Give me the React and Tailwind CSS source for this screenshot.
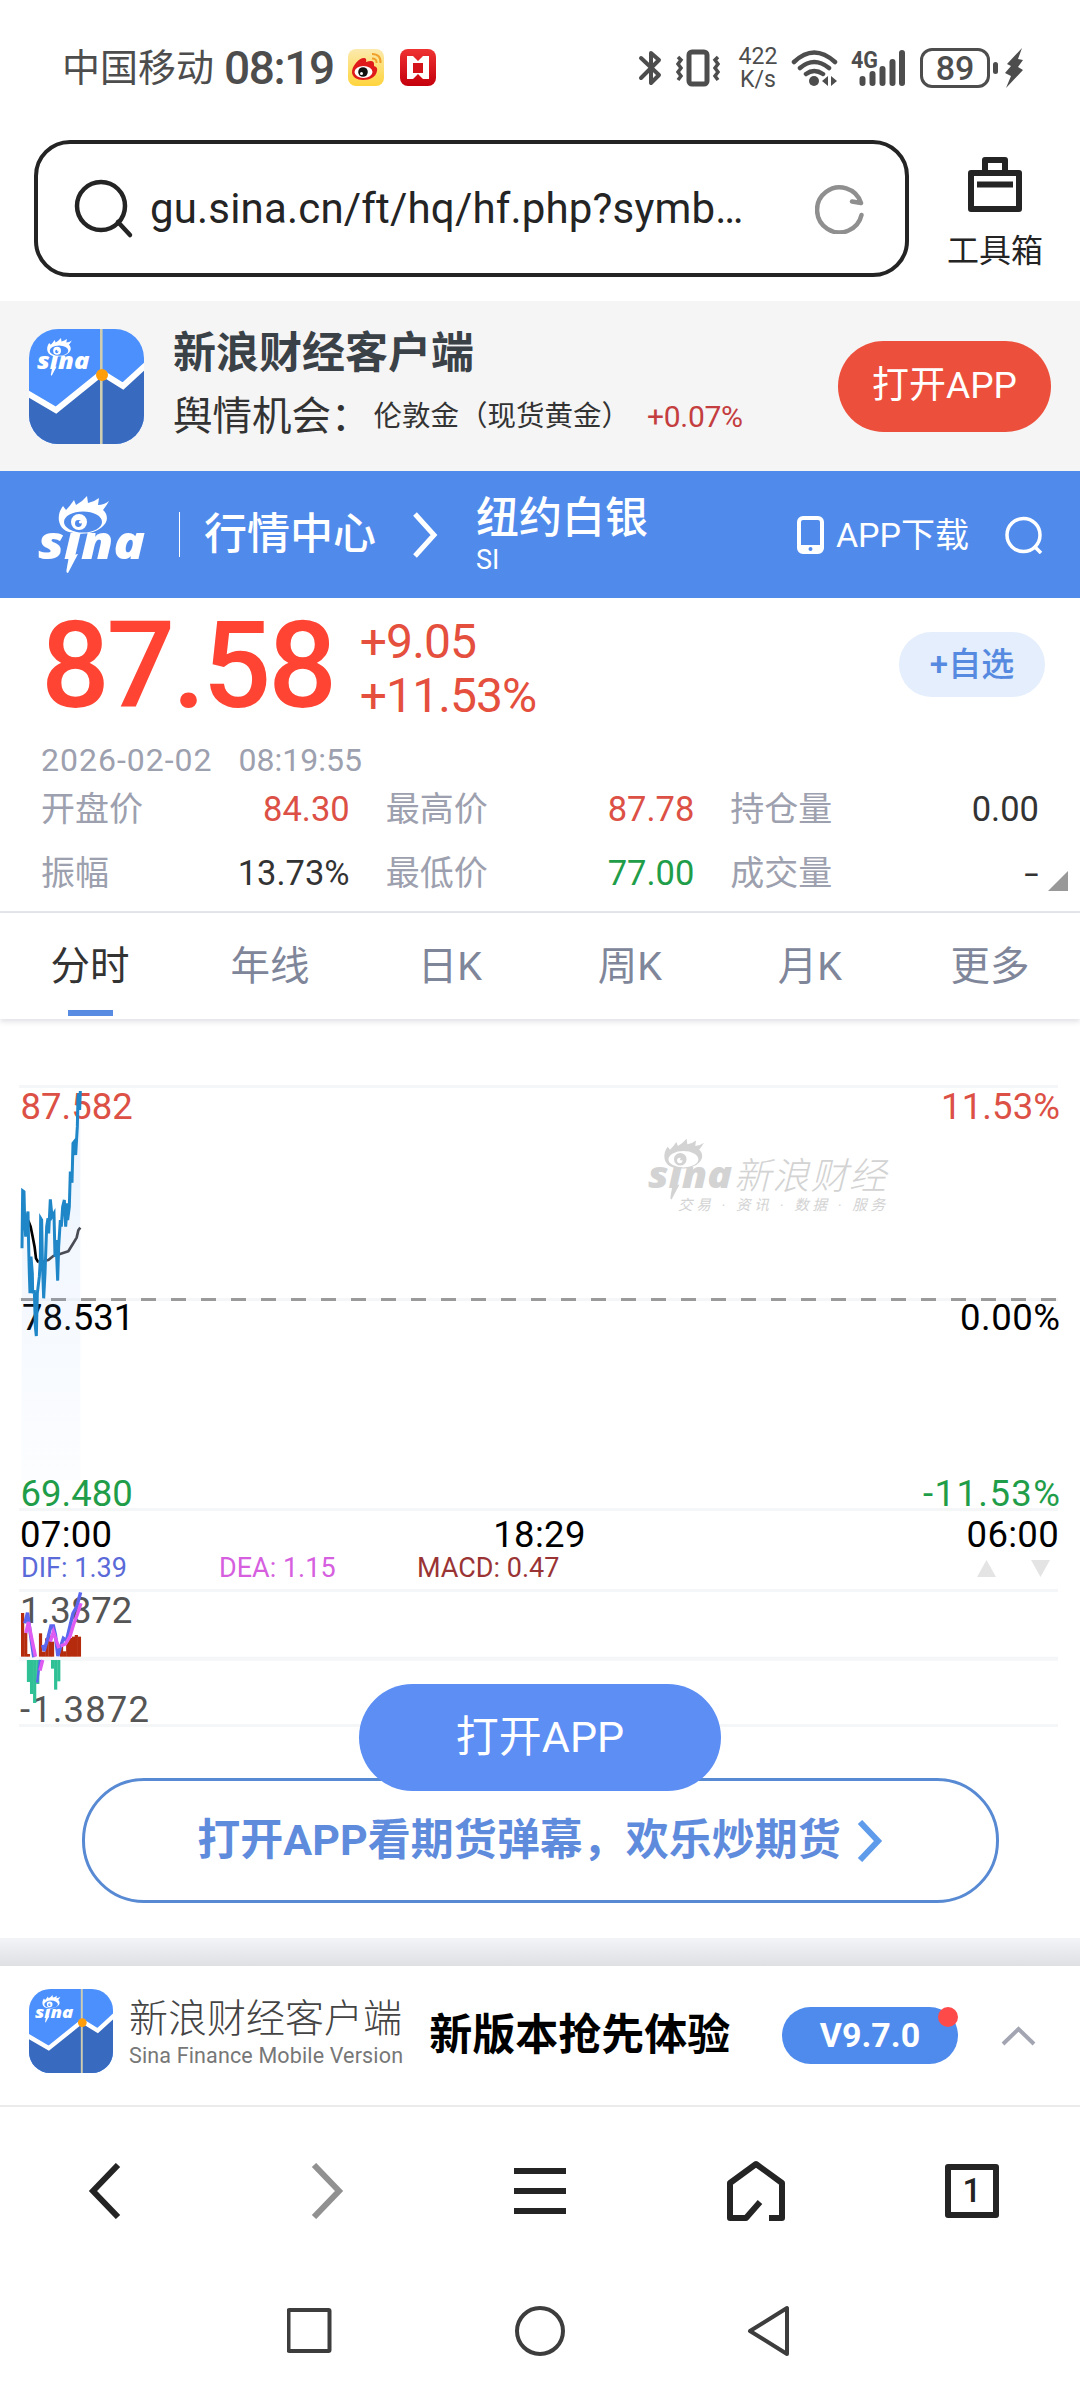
const SinaLogo = ({ className }) => (
  <svg viewBox="0 0 108 78" className={className} fill="currentColor">
    <path
      fillRule="evenodd"
      d="M21 25C20 19 22 14 25 10L28 14Q32 10 36 4L38 9Q44 6 49 0L50 7Q56 6 61 2L60 9Q66 9 71 5Q69 9 65 14C70 18 70 25 66 29C59 37 45 40 31 36C25 34 22 30 21 25Z M26 26a19 10.5 0 1 0 38 0a19 10.5 0 1 0 -38 0Z"
    />
    <path
      fillRule="evenodd"
      d="M33 26a8 8 0 1 0 16 0a8 8 0 1 0 -16 0Z M37 27.5a3.4 3.4 0 1 0 6.8 0a3.4 3.4 0 1 0 -6.8 0Z"
    />
    <circle cx="42.5" cy="26" r="1.6" />
    <path d="M31 60L40 58L30 77Q28 77 28.500 74Z" />
    <text
      x="0"
      y="63"
      fontSize="46"
      fontWeight="800"
      fontStyle="italic"
      fontFamily="Open Sans, sans-serif"
      textLength="107"
      lengthAdjust="spacingAndGlyphs"
    >
      sına
    </text>
  </svg>
)

const AppIcon = ({ className, id }) => (
  <div className={`relative shrink-0 ${className}`}>
    <svg viewBox="0 0 115 115" className="h-full w-full">
      <clipPath id={id}>
        <rect width="115" height="115" rx="29" />
      </clipPath>
      <g clipPath={`url(#${id})`}>
        <rect width="115" height="115" fill="#4c90fd" />
        <path d="M0 65L27 81L73 44L94 58L115 37V115H0Z" fill="#386abf" />
        <path d="M-2 64L27 81L73 44L94 57L118 35" fill="none" stroke="#fff" strokeWidth="6" />
        <path d="M72.300 0V115" stroke="#cfcdb0" strokeWidth="2.600" />
        <circle cx="73" cy="46" r="6" fill="#ff9d0a" />
      </g>
    </svg>
    <SinaLogo className="absolute left-[7%] top-[8%] w-[46%] text-white" />
  </div>
)

const Chevron = ({ className, d, w, h, stroke = 5 }) => (
  <svg width={w} height={h} viewBox={`0 0 ${w} ${h}`} className={className} fill="none" stroke="currentColor" strokeWidth={stroke}>
    <path d={d} />
  </svg>
)

const StatusBar = () => (
  <div className="flex h-[140px] items-center pl-[62px] pr-[57px] pb-[5px] text-[#4d4d4d]">
    <span className="text-[38px] leading-none">中国移动</span>
    <span className="ml-[10px] text-[46px] font-medium leading-none tracking-[-1.400px]">08:19</span>
    <svg width="36" height="37" viewBox="0 0 36 37" className="ml-[14px]">
      <defs>
        <linearGradient id="wb" x2="0" y2="1">
          <stop stopColor="#fbeaae" />
          <stop offset="1" stopColor="#ffd43c" />
        </linearGradient>
      </defs>
      <rect width="36" height="37" rx="8" fill="url(#wb)" />
      <path d="M4 23C4 17 11 9 16 9Q19 9 18 13Q26 10 26 15L26 17Q30 18 29 22C28 28 22 31 15 31C9 31 4 28 4 23Z" fill="#e0191b" />
      <ellipse cx="15.500" cy="23" rx="9" ry="6" fill="#fff" />
      <circle cx="15" cy="23" r="4.800" fill="#111" />
      <circle cx="13.500" cy="24.500" r="1.500" fill="#fff" />
      <path d="M24 5Q33 5 32.500 14M24 9.500Q29 9.500 28.500 14" fill="none" stroke="#f0a12c" strokeWidth="2" />
    </svg>
    <svg width="36" height="37" viewBox="0 0 36 37" className="ml-[16px]">
      <defs>
        <linearGradient id="rd" x2="0" y2="1">
          <stop stopColor="#ef3232" />
          <stop offset="1" stopColor="#c4000c" />
        </linearGradient>
      </defs>
      <rect width="36" height="37" rx="8" fill="url(#rd)" />
      <path d="M7 7H13L18 12L23 7H29V30H23L18 25L13 30H7Z" fill="#fff" />
      <path d="M13 14H23V24H13Z" fill="#d3141a" />
    </svg>

    <div className="ml-auto flex items-center">
      <svg width="24" height="38" viewBox="0 0 24 38" fill="none" stroke="currentColor" strokeWidth="4" strokeLinejoin="round" strokeLinecap="round">
        <path d="M3 9L21 26L13 34V4L21 11L3 29" />
      </svg>
      <svg width="46" height="38" viewBox="0 0 46 38" fill="none" stroke="currentColor" className="ml-[13px]">
        <rect x="14" y="3" width="18" height="32" rx="3" strokeWidth="5" />
        <path d="M3 8L6 11L3 15L6 19L3 23L6 27L3 31M43 8L40 11L43 15L40 19L43 23L40 27L43 31" strokeWidth="3.500" />
      </svg>
      <div className="ml-[16px] flex w-[42px] flex-col items-center text-[23px] leading-[23px]">
        <span>422</span>
        <span>K/s</span>
      </div>
      <svg width="48" height="40" viewBox="0 0 48 40" fill="none" stroke="currentColor" strokeWidth="4.500" strokeLinecap="round" className="ml-[12px]">
        <path d="M3 14Q23 -5 44 14M9 20Q23 8 38 20M15 26Q23 20 32 26" />
        <circle cx="23" cy="33" r="5" fill="currentColor" stroke="none" />
        <path d="M37 28V38L31 33ZM40 28V38L46 33Z" fill="currentColor" stroke="none" />
      </svg>
      <svg width="56" height="40" viewBox="0 0 56 40" fill="none" stroke="currentColor" strokeWidth="6" strokeLinecap="round" className="ml-[12px] overflow-visible">
        <path d="M11.500 31V35M21.500 26V35M31.500 21V35M41.500 14V35M51 5V35" />
        <text x="0" y="20" fontSize="24" fontWeight="700" fill="currentColor" stroke="none" textLength="27" lengthAdjust="spacingAndGlyphs">
          4G
        </text>
      </svg>
      <div className="ml-[13px] flex h-[40px] w-[70px] items-center justify-center rounded-[12px] border-[3px] border-current text-[34px] font-medium leading-none">
        89
      </div>
      <div className="ml-[3px] h-[12px] w-[5px] rounded-full bg-current" />
      <svg width="18" height="40" viewBox="0 0 18 40" fill="currentColor" className="ml-[7px]">
        <path d="M17 0L2 16L6 18L0 25L6 28L1 40L18 22L13 19L18 12L13 11Z" />
      </svg>
    </div>
  </div>
)

const AddressBar = () => (
  <div className="flex h-[161px] pl-[34px]">
    <div className="flex h-[137px] w-[875px] items-center rounded-[36px] border-[4px] border-[#242424] pl-[36px] pr-[40px] text-[#242424]">
      <svg width="60" height="60" viewBox="0 0 60 60" fill="none" stroke="currentColor" strokeWidth="4.500" strokeLinecap="round">
        <circle cx="27" cy="27" r="24" />
        <path d="M44 43L56 56" />
      </svg>
      <span className="ml-[16px] text-[42px] leading-none tracking-[0.180px]">gu.sina.cn/ft/hq/hf.php?symb…</span>
      <svg width="50" height="50" viewBox="0 0 50 50" fill="none" stroke="#8f8f8f" strokeWidth="4.500" className="ml-auto">
        <path d="M46.500 31A22.500 22.500 0 1 1 46 19L37 17.500" strokeLinecap="round" strokeLinejoin="round" />
      </svg>
    </div>
    <div className="ml-[38px] mt-[17px] flex flex-col items-center text-[#242424]">
      <svg width="54" height="55" viewBox="0 0 54 55" fill="none" stroke="currentColor" strokeWidth="6" strokeLinejoin="round">
        <rect x="3" y="16" width="48" height="36" />
        <path d="M17 14V3H37V14M9 27.500H45" />
      </svg>
      <span className="mt-[21px] text-[32px] leading-[36px]">工具箱</span>
    </div>
  </div>
)

const Banner = () => (
  <div className="flex h-[170px] items-center bg-[#f5f5f5] pl-[29px] pr-[29px]">
    <AppIcon id="icon-top" className="h-[115px] w-[115px]" />
    <div className="ml-[29px] flex flex-col">
      <span className="mt-[-2px] text-[43px] font-bold leading-[56px] text-[#3a4147]">新浪财经客户端</span>
      <div className="mt-[8px] flex items-center leading-[56px] text-[#333]">
        <span className="text-[39.500px]">舆情机会：</span>
        <span className="ml-[3px] text-[28.500px]">伦敦金（现货黄金）</span>
        <span className="ml-[17px] text-[30px] tracking-[-0.300px] text-[#c43d3f]">+0.07%</span>
      </div>
    </div>
    <button className="ml-auto h-[91px] w-[213px] rounded-full bg-[#ec503c] text-[37px] text-white">打开APP</button>
  </div>
)

const Header = () => (
  <div className="flex h-[127px] items-center bg-[#508bec] pl-[38px] pr-[37px] text-white">
    <SinaLogo className="h-[78px] w-[108px]" />
    <div className="ml-[33px] h-[45px] w-px bg-white" />
    <span className="ml-[24px] text-[43px] font-medium leading-none">行情中心</span>
    <Chevron w={26} h={48} d="M3 3L22 24L3 45" className="ml-[36px]" />
    <div className="ml-[38px] flex flex-col">
      <span className="text-[43px] font-medium leading-[50px]">纽约白银</span>
      <span className="text-[27px] leading-[34px]">SI</span>
    </div>
    <svg width="27" height="38" viewBox="0 0 27 38" className="ml-auto">
      <rect x="2" y="2" width="23" height="34" rx="4" fill="none" stroke="#fff" strokeWidth="4" />
      <path d="M3 29H24V35H3Z" fill="#fff" />
      <circle cx="13.500" cy="33" r="2" fill="#508bec" />
    </svg>
    <span className="ml-[12px] text-[34px] leading-none">APP下载</span>
    <svg width="38" height="38" viewBox="0 0 38 38" fill="none" stroke="#fff" strokeWidth="3.500" className="ml-[36px]">
      <circle cx="18.500" cy="19" r="16.500" />
      <path d="M29 30L36 37" />
    </svg>
  </div>
)

const stats = [
  { label: "开盘价", value: "84.30", color: "text-[#dc5045]" },
  { label: "最高价", value: "87.78", color: "text-[#dc5045]" },
  { label: "持仓量", value: "0.00", color: "text-[#333]" },
  { label: "振幅", value: "13.73%", color: "text-[#333]" },
  { label: "最低价", value: "77.00", color: "text-[#1f9d49]" },
  { label: "成交量", value: "-", color: "text-[#333] origin-right scale-x-150" },
]

const Quote = () => (
  <div className="relative h-[315px] border-b-2 border-[#e5e6eb] pl-[41px] pr-[35px]">
    <div className="flex h-[138px]">
      <span className="pt-[8px] text-[121px] font-medium leading-[121px] tracking-[-3.200px] text-[#ff4433]">87.58</span>
      <div className="ml-[26px] flex flex-col pt-[17px] text-[48px] leading-[54px] tracking-[-0.900px] text-[#e54f3d]">
        <span>+9.05</span>
        <span>+11.53%</span>
      </div>
      <button className="ml-auto mt-[34px] h-[65px] w-[146px] rounded-full bg-[#e4eefc] text-[33px] font-medium text-[#568ae0]">+自选</button>
    </div>
    <div className="mt-[6px] flex h-[36px] items-center text-[32px] leading-none text-[#9da0ae]">
      <span className="tracking-[1px]">2026-02-02</span>
      <span className="ml-[26px]">08:19:55</span>
    </div>
    <div className="mt-[-1px] grid w-[998px] grid-cols-3 gap-x-[36px]">
      {stats.map((item) => (
        <div key={item.label} className="flex h-[64px] items-center justify-between leading-none">
          <span className="text-[34px] text-[#9da0ae]">{item.label}</span>
          <span className={`text-[34.500px] ${item.color}`}>{item.value}</span>
        </div>
      ))}
    </div>
    <div className="absolute bottom-[20px] right-[12px] h-[20px] w-[20px] bg-[#999] [clip-path:polygon(100%_0,100%_100%,0_100%)]" />
  </div>
)

const tabs = ["分时", "年线", "日K", "周K", "月K", "更多"]

const Tabs = () => (
  <div className="relative z-10 grid h-[106px] grid-cols-6 bg-white shadow-[0_3px_5px_rgba(60,60,90,0.14)]">
    {tabs.map((tab, i) => (
      <div key={tab} className={`flex flex-col items-center text-[39.500px] ${i === 0 ? "text-[#333]" : "text-[#80869a]"}`}>
        <span className="mt-[24px] leading-[60px]">{tab}</span>
        {i === 0 && <span className="mt-[13px] h-[6px] w-[45px] bg-[#588be2]" />}
      </div>
    ))}
  </div>
)

const pricePoints =
  "66,565 68,392 72,395 74,480 77,530 80,475 84,455 86,560 88,640 90,700 93,590 97,640 98,700 103,690 106,800 109,828 112,700 118,650 121,600 122,475 125,480 127,600 131,715 135,640 140,500 144,475 146,520 151,418 156,470 162,460 165,590 168,540 173,662 176,560 181,480 184,500 188,440 193,420 197,500 202,430 203,480 208,440 211,335 216,368 219,250 223,245 227,285 232,200 234,115 236,100 239,150 241,93"

const PriceChart = () => (
  <svg width="1080" height="498" viewBox="0 1019 1080 498" className="block" fontSize="36.500">
    <defs>
      <linearGradient id="area" x2="0" y2="1">
        <stop stopColor="#6aa5f5" stopOpacity="0.14" />
        <stop offset="1" stopColor="#8fbcfb" stopOpacity="0.03" />
      </linearGradient>
    </defs>
    <path d="M19 1086.500H1058M19 1299.500H1058M19 1509.500H1058" stroke="#f5f6f8" strokeWidth="3" />
    <g fill="#d3d3d3" fontStyle="italic">
      <svg x="648" y="1138" width="85" height="63" className="text-[#d3d3d3]">
        <SinaLogo />
      </svg>
      <text x="734" y="1189" fontSize="37" fontWeight="300" textLength="152">新浪财经</text>
      <text x="678" y="1210" fontSize="14.500" textLength="207">交易 · 资讯 · 数据 · 服务</text>
    </g>
    <text x="20.500" y="1119" fill="#dc5045">87.582</text>
    <text x="22" y="1330">78.531</text>
    <text x="20.500" y="1506" fill="#1f9d49">69.480</text>
    <text x="941" y="1119" fill="#dc5045" textLength="119">11.53%</text>
    <text x="960" y="1330" textLength="100">0.00%</text>
    <text x="923" y="1506" fill="#1f9d49" textLength="137">-11.53%</text>
    <path d="M21 1299.500H1058" stroke="#9a9a9a" strokeWidth="3" strokeDasharray="15 15" />
    <g transform="translate(0 1060) scale(0.3333)" fill="none" strokeLinejoin="round">
      <polygon points={`64,1260 ${pricePoints} 241,1260`} fill="url(#area)" />
      <path d="M85 482L92 500L98 530L104 562L108 595L115 607" stroke="#000" strokeWidth="8" />
      <path d="M115 607L145 600L160 588L180 582L205 574L218 553L230 533L235 511L241 503" stroke="#4a4c55" strokeWidth="8" />
      <polyline points={pricePoints} stroke="#1f86c8" strokeWidth="9" strokeLinejoin="miter" />
    </g>
  </svg>
)

// [x, top] of the bars above zero, [x, bottom] of the bars below it
const upBars = [[61, 459], [70, 518], [78, 582], [113, 520], [122, 575], [131, 535], [140, 527], [148, 545], [174, 558], [183, 574], [192, 545], [200, 534], [209, 530], [217, 525], [226, 530]]
const downBars = [[78, 666], [87, 702], [96, 729], [105, 672], [148, 626], [157, 689], [166, 664]]

const MacdChart = () => (
  <svg width="1080" height="189" viewBox="0 1589 1080 189" className="block" fontSize="36.500">
    <path d="M19 1590.500H1058M19 1725.500H1058" stroke="#f5f6f8" strokeWidth="3" />
    <path d="M19 1658.700H1058" stroke="#f5f6f8" strokeWidth="4" />
    <text x="20" y="1623" fill="#555">1.3872</text>
    <text x="20" y="1722" fill="#555" textLength="129">-1.3872</text>
    <g transform="translate(0 1460) scale(0.3444 0.3333)" fill="none">
      {upBars.map(([x, y]) => (
        <rect key={x} x={x} y={y} width="9.300" height={590 - y} fill="#b52b0d" />
      ))}
      {downBars.map(([x, y]) => (
        <rect key={x} x={x} y="600" width="9.300" height={y - 600} fill="#2fc096" />
      ))}
      <path d="M72 490L80 458L88 520L98 592M124 555L128 573L140 530L148 498H155L161 525L168 588L176 560L184 535L193 542L204 495L212 460L223 440L234 397" stroke="#5b66ee" strokeWidth="10" />
      <path d="M116 600L108 668" stroke="#5b66ee" strokeWidth="7" />
      <path d="M75 519L83 486L90 525L103 590M124 600L116 632M146 545L155 515L163 540L171 565M176 558L190 552L203 530L213 495L224 465L235 430" stroke="#de5cf1" strokeWidth="10" />
    </g>
  </svg>
)

const Promo = () => (
  <div className="flex h-[141px] items-center border-b-2 border-[#ebebeb] bg-white pl-[29px] pr-[44px]">
    <AppIcon id="icon-bottom" className="mt-[-10px] h-[84px] w-[84px]" />
    <div className="ml-[16px] mt-[-3px] flex flex-col">
      <span className="text-[39px] font-light leading-[44px] text-[#444]">新浪财经客户端</span>
      <span className="text-[21.500px] leading-[30px] tracking-[0.150px] text-[#777]">Sina Finance Mobile Version</span>
    </div>
    <span className="ml-[26px] text-[43px] font-bold leading-none text-black">新版本抢先体验</span>
    <div className="relative ml-auto flex h-[57px] w-[176px] items-center justify-center rounded-full bg-[#4f8bec] text-[34px] font-bold text-white">
      V9.7.0
      <span className="absolute right-0 top-0 h-[20px] w-[20px] rounded-full bg-[#ff4a4a]" />
    </div>
    <Chevron w={35} h={20} d="M2 18L17.500 3L33 18" stroke={4} className="ml-[43px] text-[#a3a6b2]" />
  </div>
)

const BrowserNav = () => (
  <div className="grid h-[167px] grid-cols-5 items-center justify-items-center text-[#242424]">
    <Chevron w={34} h={56} d="M30 2L5 28L30 54" stroke={6} className="mr-[6px]" />
    <Chevron w={34} h={56} d="M4 2L29 28L4 54" stroke={6} className="ml-[6px] text-[#919191]" />
    <div className="flex flex-col gap-[14px]">
      <span className="h-[6px] w-[52px] bg-current" />
      <span className="h-[6px] w-[52px] bg-current" />
      <span className="h-[6px] w-[52px] bg-current" />
    </div>
    <svg width="60" height="62" viewBox="0 0 60 62" fill="none" stroke="currentColor" strokeWidth="6" strokeLinejoin="round">
      <path d="M34 42L20 58H4V23L30 4L56 23V58H43" />
    </svg>
    <div className="flex h-[54px] w-[54px] items-center justify-center rounded-[3px] border-[6px] border-current text-[33px] font-medium leading-none">1</div>
  </div>
)

const SystemNav = () => (
  <div className="flex h-[113px] justify-center pt-[31px]">
    <svg width="506" height="52" viewBox="287 2305 506 52" fill="none" stroke="#3d3d3d" strokeWidth="4" strokeLinejoin="round">
      <rect x="288.500" y="2310" width="41" height="41" rx="1" />
      <circle cx="540" cy="2331" r="23" />
      <path d="M787 2308V2354L750 2331Z" />
    </svg>
  </div>
)

export default function App() {
  return (
    <div className="relative flex h-[2388px] w-[1080px] flex-col overflow-hidden bg-white font-[Roboto,'Noto_Sans_CJK_SC',sans-serif]">
      <StatusBar />
      <AddressBar />
      <Banner />
      <Header />
      <Quote />
      <Tabs />
      <PriceChart />
      <div className="flex h-[36px] items-center justify-between pl-[20px] pr-[21px] text-[36.500px] leading-none tracking-[0.300px] text-black">
        <span>07:00</span>
        <span>18:29</span>
        <span>06:00</span>
      </div>
      <div className="flex h-[36px] items-center pl-[21px] pr-[30px] pb-[5px] text-[27px] leading-none">
        <span className="w-[198px] text-[#5a6ad8]">DIF: 1.39</span>
        <span className="w-[198px] text-[#d65fe0]">DEA: 1.15</span>
        <span className="text-[#9a3434]">MACD: 0.47</span>
        <span className="ml-auto h-[17px] w-[19px] bg-[#e4e4e4] [clip-path:polygon(50%_0,100%_100%,0_100%)]" />
        <span className="ml-[35px] h-[17px] w-[19px] bg-[#e4e4e4] [clip-path:polygon(0_0,100%_0,50%_100%)]" />
      </div>
      <MacdChart />
      <div className="mx-auto flex h-[125px] w-[917px] shrink-0 items-center justify-center rounded-[62px] border-[3px] border-[#588ad4] text-[43px] font-bold text-[#5f8bdd]">
        打开APP看期货弹幕，欢乐炒期货
        <Chevron w={26} h={42} d="M3 2L21 21L3 40" stroke={6} className="ml-[16px] text-[#5e9bea]" />
      </div>
      <div className="mt-[35px] h-[28px] bg-gradient-to-b from-[#f3f4f8] to-[#dfe0e4]" />
      <Promo />
      <BrowserNav />
      <SystemNav />
      <button className="absolute left-[359px] top-[1684px] h-[107px] w-[362px] rounded-full bg-[#5c8ef4] text-[43px] text-white">打开APP</button>
    </div>
  )
}
